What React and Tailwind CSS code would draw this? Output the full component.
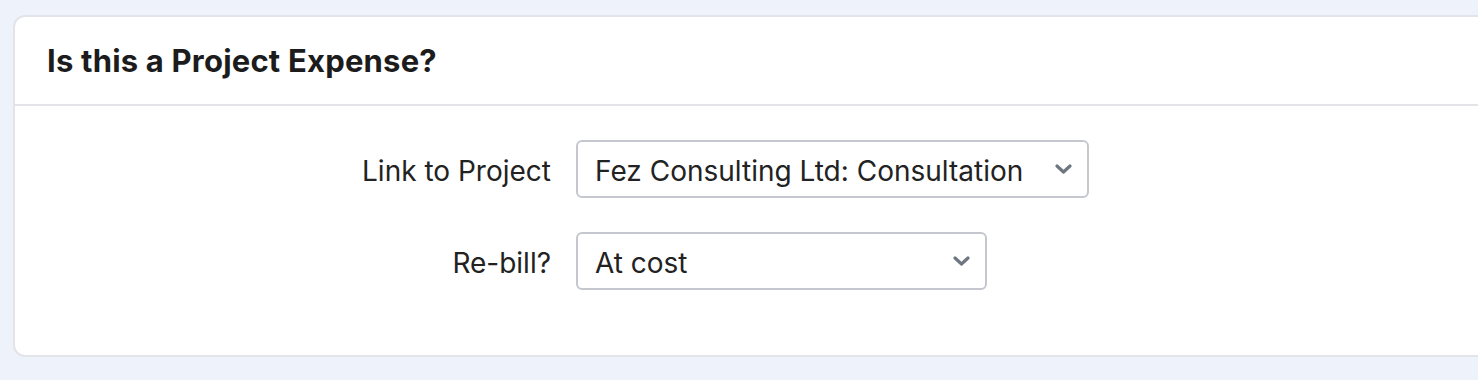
import React from 'react';

const Chevron = () => (
  <svg width="17" height="10" viewBox="0 0 17 10" fill="none" className="text-[#6e7781]">
    <path d="M2 2l6.5 6 6.5-6" stroke="currentColor" strokeWidth="3.2" strokeLinecap="round" strokeLinejoin="round" />
  </svg>
);

const Field = ({ label, value, width }) => (
  <div className="flex items-center">
    <label className="w-[561px] pr-[25px] pt-[4px] text-right text-[28px] text-[#222]">{label}</label>
    <div className={`${width} h-[58px] flex items-center justify-between pl-[17px] pr-[15px] border-2 border-[#c4c8ce] rounded-[6px] bg-white`}>
      <span className="pt-[3px] text-[28px] text-[#222]">{value}</span>
      <Chevron />
    </div>
  </div>
);

export default function App() {
  return (
    <div className="w-[1478px] h-[380px] bg-[#eef2fa] pt-[15px] pl-[13px] overflow-hidden" style={{ fontFamily: 'Inter, "Noto Sans", sans-serif' }}>
      <div className="w-[1500px] h-[342px] bg-white border-2 border-[#e2e4ea] rounded-[12px]">
        <div className="h-[89px] flex items-center pl-[32px] border-b-2 border-[#e2e4ea]">
          <h2 className="pt-[2px] text-[31px] font-bold tracking-[0.2px] text-[#1c1c1c]">Is this a Project Expense?</h2>
        </div>
        <div className="pt-[34px] flex flex-col gap-[34px]">
          <Field label="Link to Project" value="Fez Consulting Ltd: Consultation" width="w-[513px]" />
          <Field label="Re-bill?" value="At cost" width="w-[411px]" />
        </div>
      </div>
    </div>
  );
}
